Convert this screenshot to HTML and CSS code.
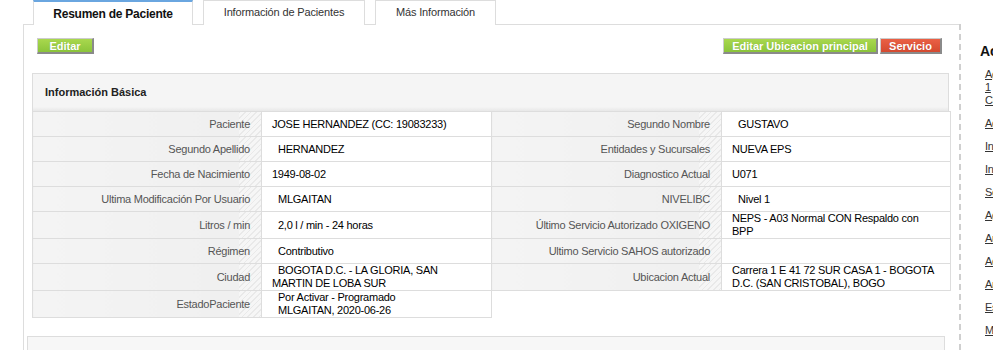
FILE: index.html
```html
<!DOCTYPE html>
<html lang="es">
<head>
    <meta charset="UTF-8">
    <title>Resumen de Paciente</title>
    <link rel="stylesheet" href="styles.css">
</head>
<body>
    <ul class="tabs">
        <li class="tab active">Resumen de Paciente</li>
        <li class="tab tab-info">Información de Pacientes</li>
        <li class="tab tab-more">Más Información</li>
    </ul>

    <div class="layout">
        <div class="panel">
            <div class="toolbar">
                <button class="btn btn-green btn-edit">Editar</button>
                <div class="toolbar-right">
                    <button class="btn btn-green btn-ubic">Editar Ubicacion principal</button>
                    <button class="btn btn-red btn-serv">Servicio</button>
                </div>
            </div>

            <div class="info-box">
                <div class="info-header">Información Básica</div>
                <table class="info-table">
                    <colgroup>
                        <col class="c-label-l">
                        <col class="c-value-l">
                        <col class="c-label-r">
                        <col class="c-value-r">
                    </colgroup>
                    <tr>
                        <td class="lbl">Paciente</td>
                        <td class="val">JOSE HERNANDEZ (CC: 19083233)</td>
                        <td class="lbl">Segundo Nombre</td>
                        <td class="val ind">GUSTAVO</td>
                    </tr>
                    <tr>
                        <td class="lbl">Segundo Apellido</td>
                        <td class="val ind">HERNANDEZ</td>
                        <td class="lbl">Entidades y Sucursales</td>
                        <td class="val">NUEVA EPS</td>
                    </tr>
                    <tr>
                        <td class="lbl">Fecha de Nacimiento</td>
                        <td class="val">1949-08-02</td>
                        <td class="lbl">Diagnostico Actual</td>
                        <td class="val">U071</td>
                    </tr>
                    <tr>
                        <td class="lbl">Ultima Modificación Por Usuario</td>
                        <td class="val ind">MLGAITAN</td>
                        <td class="lbl">NIVELIBC</td>
                        <td class="val ind">Nivel 1</td>
                    </tr>
                    <tr>
                        <td class="lbl">Litros / min</td>
                        <td class="val ind">2,0 l / min - 24 horas</td>
                        <td class="lbl">Último Servicio Autorizado OXIGENO</td>
                        <td class="val">NEPS - A03 Normal CON Respaldo con BPP</td>
                    </tr>
                    <tr>
                        <td class="lbl">Régimen</td>
                        <td class="val ind">Contributivo</td>
                        <td class="lbl">Ultimo Servicio SAHOS autorizado</td>
                        <td class="val"></td>
                    </tr>
                    <tr>
                        <td class="lbl">Ciudad</td>
                        <td class="val ind wide-pad">BOGOTA D.C. - LA GLORIA, SAN MARTIN DE LOBA SUR</td>
                        <td class="lbl">Ubicacion Actual</td>
                        <td class="val">Carrera 1 E 41 72 SUR CASA 1 - BOGOTA D.C. (SAN CRISTOBAL), BOGO</td>
                    </tr>
                    <tr class="tall">
                        <td class="lbl">EstadoPaciente</td>
                        <td class="val"><div class="ind">Por Activar - Programado</div><div class="ind">MLGAITAN, 2020-06-26</div></td>
                        <td class="blank" colspan="2"></td>
                    </tr>
                </table>
            </div>

            <div class="next-box"></div>
        </div>

        <div class="sidebar">
            <h3 class="side-title">Acciones</h3>
            <ul class="side-links">
                <li><a href="#">Agregar Visita</a><br><a href="#">1</a><br><a href="#">Clínica</a></li>
                <li><a href="#">Adjuntar Archivo</a></li>
                <li><a href="#">Ingresar Novedad</a></li>
                <li><a href="#">Inactivar Paciente</a></li>
                <li><a href="#">Seguimiento</a></li>
                <li><a href="#">Agendar Cita</a></li>
                <li><a href="#">Autorizaciones</a></li>
                <li><a href="#">Actas de Entrega</a></li>
                <li><a href="#">Anotaciones</a></li>
                <li><a href="#">Estado de Cuenta</a></li>
                <li><a href="#">Mensajes</a></li>
            </ul>
        </div>
    </div>
</body>
</html>
```

FILE: styles.css
```css
body {
    margin: 0;
    font-family: "Liberation Sans", Arial, sans-serif;
    font-size: 11px;
    letter-spacing: -0.25px;
    color: #000;
    background: #fff;
    width: 993px;
    height: 350px;
    overflow: hidden;
}

/* Tabs */
.tabs {
    display: flex;
    gap: 10px;
    list-style: none;
    margin: 0;
    padding: 0 0 0 33px;
    height: 24px;
    position: relative;
    z-index: 1;
}
.tab {
    box-sizing: border-box;
    height: 25px;
    border: 1px solid #ddd;
    border-bottom: none;
    background: #fff;
    color: #333;
    text-align: center;
    line-height: 22px;
    font-size: 11px;
    letter-spacing: -0.15px;
}
.tab.active {
    width: 160px;
    border-top: 2px solid #6aa6e0;
    font-weight: bold;
    font-size: 12px;
    letter-spacing: -0.25px;
    color: #111;
    line-height: 24px;
}
.tab-info {
    width: 162px;
}
.tab-more {
    width: 121px;
}

/* Layout */
.layout {
    display: flex;
    align-items: stretch;
    height: 326px;
}
.panel {
    box-sizing: border-box;
    margin-left: 23px;
    width: 936px;
    border-top: 1px solid #ddd;
    border-left: 1px solid #ddd;
    padding-top: 13px;
}

/* Buttons */
.toolbar {
    display: flex;
    justify-content: space-between;
    padding: 0 17px 0 13px;
}
.toolbar-right {
    display: flex;
    gap: 2px;
}
.btn {
    box-sizing: border-box;
    height: 16px;
    padding: 0;
    border: 1px solid #ccc;
    border-right: 2px solid #8a8a8a;
    border-bottom: 2px solid #8a8a8a;
    font-family: "Liberation Sans", Arial, sans-serif;
    font-size: 11px;
    font-weight: bold;
    letter-spacing: 0;
    color: #fff;
    line-height: 12px;
    text-shadow: 0 0 1px rgba(0,0,0,0.15);
}
.btn-green {
    background: linear-gradient(#a9d84e, #8bc43a);
}
.btn-red {
    background: linear-gradient(#ea6045, #d44a30);
}
.btn-edit {
    width: 57px;
}
.btn-ubic {
    width: 155px;
}
.btn-serv {
    width: 62px;
}

/* Info box */
.info-box {
    margin: 19px 10px 0 8px;
}
.info-header {
    box-sizing: border-box;
    height: 38px;
    border: 1px solid #ddd;
    border-bottom: none;
    background: linear-gradient(#f5f5f5 0, #f5f5f5 33px, #e4e4e4 38px);
    padding: 12px 0 0 12px;
    font-weight: bold;
    letter-spacing: 0;
    color: #222;
}
.info-table {
    border-collapse: collapse;
    table-layout: fixed;
    width: 918px;
}
.c-label-l { width: 229px; }
.c-value-l { width: 230px; }
.c-label-r { width: 230px; }
.c-value-r { width: 229px; }

.info-table td {
    height: 24px;
    padding: 0 10px;
    line-height: 13px;
    border: 1px solid #ddd;
    vertical-align: middle;
}
.info-table tr.tall td {
    height: 26px;
}
.info-table td.lbl {
    text-align: right;
    color: #555;
    padding-right: 11px;
    background:
        repeating-linear-gradient(135deg, #e9e9e9 0 1px, #f6f6f6 1px 4px) right / 22px 100% no-repeat,
        linear-gradient(to right, #f4f4f4, #efefef);
}
.info-table td.val {
    background: #fff;
    color: #000;
}
.info-table td.wide-pad {
    padding-right: 16px;
}
.info-table td.blank {
    border: none;
    border-left: 1px solid #ddd;
}
.ind {
    text-indent: 6px;
}

.next-box {
    margin: 18px 14px 0 3px;
    height: 40px;
    border: 1px solid #ddd;
    background: #f7f7f7;
}

/* Sidebar */
.sidebar {
    flex: 0 0 auto;
    width: 200px;
    border-left: 2px dashed #cfcfcf;
    padding: 19px 0 0 19px;
}
.side-title {
    margin: 0 0 9px 0;
    font-size: 14px;
    font-weight: bold;
    letter-spacing: 0;
    color: #111;
}
.side-links {
    list-style: none;
    margin: 0;
    padding: 0 0 0 5px;
}
.side-links li {
    margin-bottom: 10px;
    line-height: 13px;
}
.side-links a {
    color: #333;
    font-size: 11px;
    text-decoration: underline;
}
```
